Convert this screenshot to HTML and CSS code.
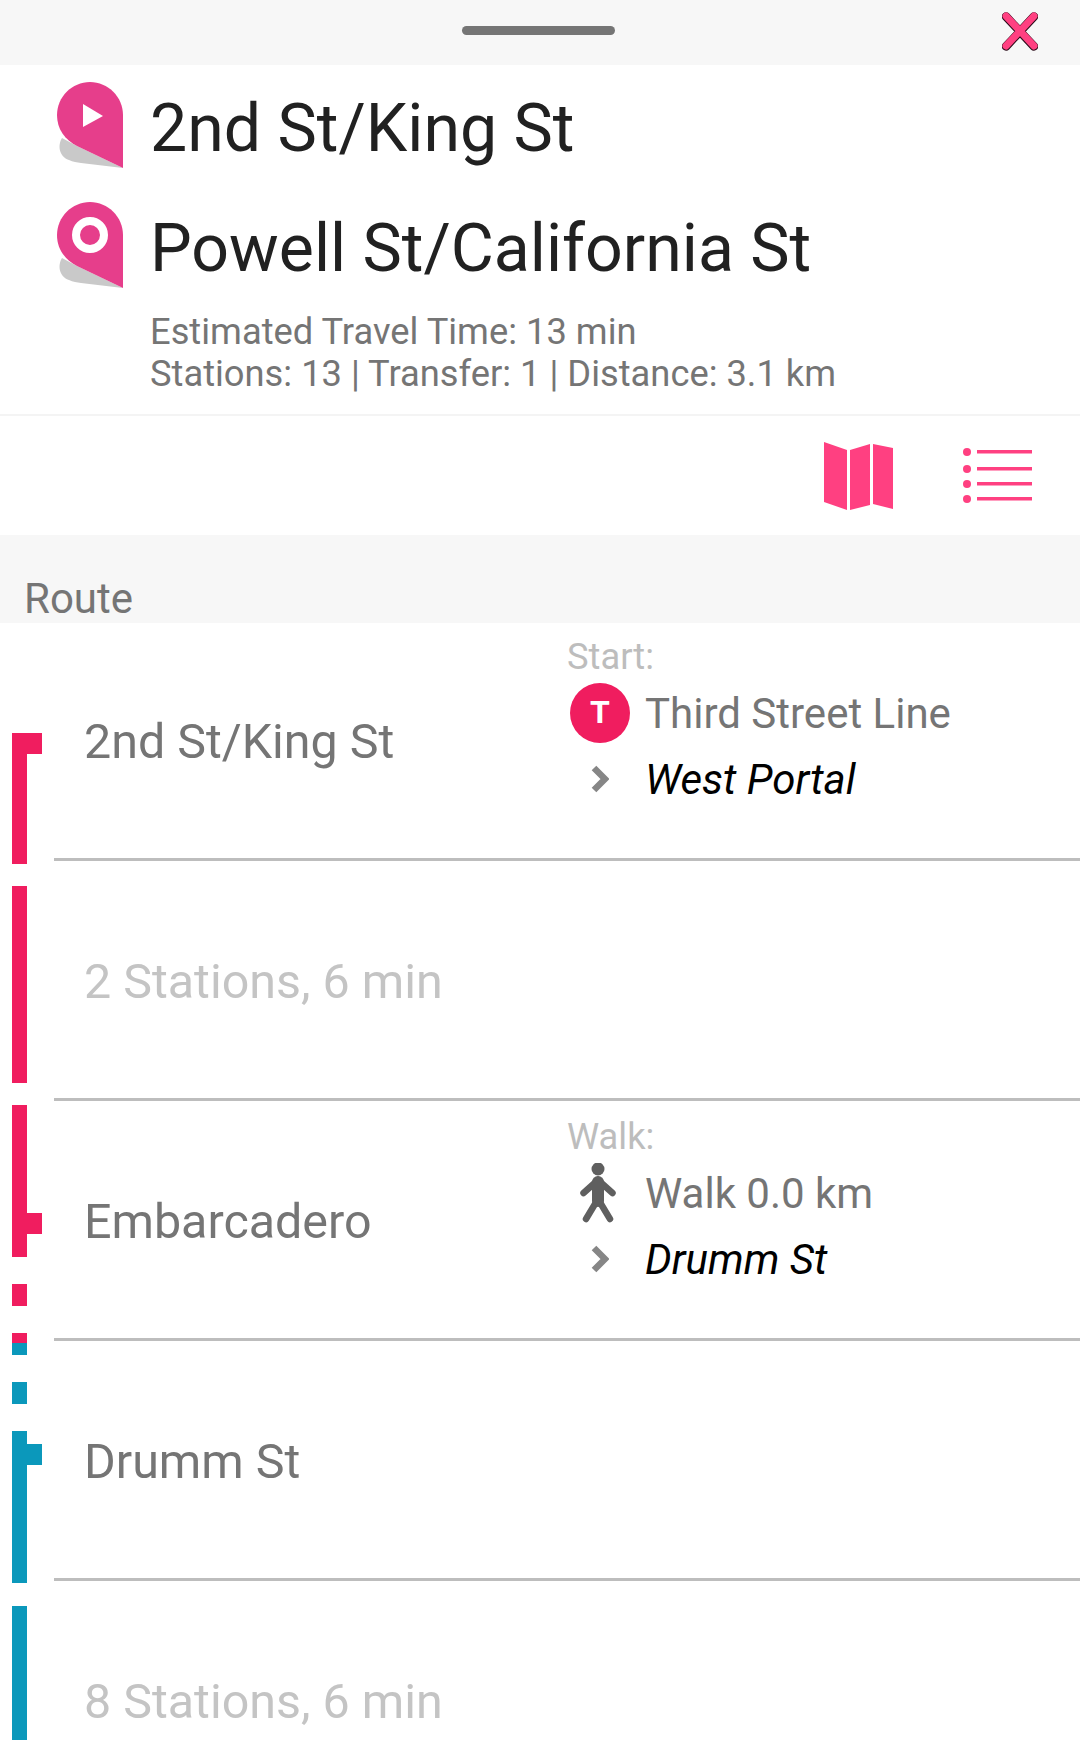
FILE: index.html
```html
<!DOCTYPE html>
<html lang="en">
<head>
    <meta charset="UTF-8">
    <meta name="viewport" content="width=device-width, initial-scale=1.0">
    <title>Route</title>
    <link rel="stylesheet" href="styles.css">
</head>
<body>
    <div class="top-bar">
        <div class="handle"></div>
        <svg class="close-icon" viewBox="0 0 36 40">
            <path class="close-edge" d="M4 4.5 L32 34.5 M32 4.5 L4 34.5"/>
            <path class="close-mark" d="M4 4 L32 34 M32 4 L4 34"/>
        </svg>
    </div>

    <header class="trip">
        <div class="stop">
            <svg class="pin" viewBox="0 0 66 86">
                <path class="pin-shadow" d="M5 56 C1 62 1 74 12 78 C16 80 20 80 24 81 L66 86 L20 64 Z"/>
                <path class="pin-body" d="M33 0 C51 0 66 15 66 33 V86 L20 64 C8 58 0 47 0 33 C0 15 15 0 33 0 Z"/>
                <path class="pin-mark" d="M26 22 L46 34 L26 45 Z"/>
            </svg>
            <h1>2nd St/King St</h1>
        </div>
        <div class="stop">
            <svg class="pin" viewBox="0 0 66 86">
                <path class="pin-shadow" d="M5 56 C1 62 1 74 12 78 C16 80 20 80 24 81 L66 86 L20 64 Z"/>
                <path class="pin-body" d="M33 0 C51 0 66 15 66 33 V86 L20 64 C8 58 0 47 0 33 C0 15 15 0 33 0 Z"/>
                <circle class="pin-ring" cx="33" cy="33" r="14"/>
            </svg>
            <h1>Powell St/California St</h1>
        </div>
        <div class="summary">
            <div>Estimated Travel Time: 13 min</div>
            <div>Stations: 13 | Transfer: 1 | Distance: 3.1 km</div>
        </div>
    </header>

    <div class="view-tabs">
        <svg class="map-icon" viewBox="0 0 69 68">
            <path d="M0 0 L23 8 V68 L0 60 Z"/>
            <path d="M26 8 L46 2 V63 L26 68 Z"/>
            <path d="M49 2 L69 6 V67 L49 62 Z"/>
        </svg>
        <svg class="list-icon" viewBox="0 0 70 56">
            <circle cx="4" cy="4" r="4"/>
            <circle cx="4" cy="21" r="4"/>
            <circle cx="4" cy="36" r="4"/>
            <circle cx="4" cy="51" r="4"/>
            <rect x="14" y="2" width="55" height="3.5"/>
            <rect x="14" y="19" width="55" height="3.5"/>
            <rect x="14" y="34" width="55" height="3.5"/>
            <rect x="14" y="49" width="55" height="3.5"/>
        </svg>
    </div>

    <div class="section-title">Route</div>

    <div class="route">
        <div class="row">
            <div class="rail">
                <div class="seg red tick-top start-1"></div>
            </div>
            <div class="row-main">
                <div class="name">2nd St/King St</div>
                <div class="detail">
                    <div class="detail-label">Start:</div>
                    <div class="step">
                        <div class="step-icon"><span class="line-badge">T</span></div>
                        <div class="step-text">Third Street Line</div>
                    </div>
                    <div class="step next">
                        <div class="step-icon">
                            <svg class="chevron" viewBox="0 0 18 28"><path d="M3 3 L14 14 L3 25"/></svg>
                        </div>
                        <div class="step-text">West Portal</div>
                    </div>
                </div>
            </div>
        </div>

        <div class="row">
            <div class="rail">
                <div class="seg red between"></div>
            </div>
            <div class="row-main">
                <div class="name muted">2 Stations, 6 min</div>
            </div>
        </div>

        <div class="row">
            <div class="rail">
                <div class="seg red tick-mid arrive"></div>
                <div class="seg red dash"></div>
                <div class="seg red dash-end"></div>
            </div>
            <div class="row-main">
                <div class="name">Embarcadero</div>
                <div class="detail">
                    <div class="detail-label">Walk:</div>
                    <div class="step">
                        <div class="step-icon">
                            <svg class="walk-icon" viewBox="0 0 38 60">
                                <circle cx="19" cy="6" r="6.5"/>
                                <path class="walk-limb" d="M19 17 L4.5 30 M19 17 L33.5 30 M19 36 L7 56 M19 36 L31 56"/>
                                <path class="walk-body" d="M19 19 V38"/>
                            </svg>
                        </div>
                        <div class="step-text">Walk 0.0 km</div>
                    </div>
                    <div class="step next">
                        <div class="step-icon">
                            <svg class="chevron" viewBox="0 0 18 28"><path d="M3 3 L14 14 L3 25"/></svg>
                        </div>
                        <div class="step-text">Drumm St</div>
                    </div>
                </div>
            </div>
        </div>

        <div class="row">
            <div class="rail">
                <div class="seg blue dash-start"></div>
                <div class="seg blue dash"></div>
                <div class="seg blue tick-mid depart"></div>
            </div>
            <div class="row-main">
                <div class="name">Drumm St</div>
            </div>
        </div>

        <div class="row">
            <div class="rail">
                <div class="seg blue between"></div>
            </div>
            <div class="row-main">
                <div class="name muted">8 Stations, 6 min</div>
            </div>
        </div>
    </div>
</body>
</html>
```

FILE: styles.css
```css
html, body {
    height: 1740px;
    overflow: hidden;
}
body {
    font-family: Roboto, Arial, sans-serif;
    margin: 0;
    padding: 0;
    background-color: white;
}

/* drag bar */
.top-bar {
    height: 65px;
    background-color: #f7f7f7;
    padding: 26px 0 0 462px;
    box-sizing: border-box;
    position: relative;
}
.handle {
    width: 153px;
    height: 9px;
    border-radius: 5px;
    background-color: #757575;
}
.close-icon {
    position: absolute;
    top: 12px;
    right: 42px;
    width: 36px;
    height: 40px;
    fill: none;
    stroke-linecap: round;
}
.close-edge {
    stroke: #2a0a18;
    stroke-width: 8.5;
}
.close-mark {
    stroke: #ff4081;
    stroke-width: 7;
}

/* trip header */
.trip {
    height: 351px;
    padding: 17px 0 0 57px;
    box-sizing: border-box;
    border-bottom: 2px solid #f4f4f4;
}
.stop {
    display: flex;
    height: 120px;
}
.pin {
    width: 66px;
    height: 86px;
    flex-shrink: 0;
}
.pin-body {
    fill: #e63e8b;
}
.pin-shadow {
    fill: #c9c9c9;
}
.pin-mark {
    fill: white;
}
.pin-ring {
    fill: none;
    stroke: white;
    stroke-width: 8;
}
h1 {
    margin: 9px 0 0 27px;
    font-size: 66.2px;
    font-weight: 400;
    line-height: 76px;
    color: #212121;
}
.summary {
    margin: -11px 0 0 93px;
    font-size: 36.3px;
    line-height: 42px;
    color: #757575;
}

/* map / list switch */
.view-tabs {
    height: 119px;
    display: flex;
    align-items: center;
    justify-content: flex-end;
    padding: 0 47px 0 0;
    gap: 70px;
    box-sizing: border-box;
}
.map-icon {
    width: 69px;
    height: 68px;
    fill: #ff4081;
}
.list-icon {
    width: 70px;
    height: 56px;
    fill: #ff4081;
}

.section-title {
    height: 88px;
    background-color: #f7f7f7;
    padding: 41px 0 0 24px;
    box-sizing: border-box;
    font-size: 42px;
    line-height: 46px;
    color: #757575;
}

/* route list */
.row {
    display: flex;
    height: 240px;
}
.rail {
    width: 54px;
    flex-shrink: 0;
    padding-left: 12px;
    box-sizing: border-box;
}
.row-main {
    flex: 1;
    height: 238px;
    box-sizing: border-box;
    border-bottom: 3px solid #bdbdbd;
    display: grid;
    grid-template-columns: 513px 1fr;
    align-items: center;
}
.name {
    padding: 2px 0 0 30px;
    font-size: 48.4px;
    color: #757575;
}
.muted {
    color: #c4c4c4;
}

/* line segments */
.seg {
    width: 15px;
    position: relative;
}
.red {
    background-color: #f01d5f;
}
.blue {
    background-color: #0b98bb;
}
.tick-top::after,
.tick-mid::after {
    content: "";
    position: absolute;
    left: 15px;
    width: 15px;
    height: 21px;
    background-color: inherit;
}
.start-1 {
    margin-top: 110px;
    height: 131px;
}
.tick-top::after {
    top: 0;
}
.between {
    margin-top: 23px;
    height: 197px;
}
.arrive {
    margin-top: 2px;
    height: 152px;
}
.arrive::after {
    top: 108px;
}
.depart {
    margin-top: 27px;
    height: 152px;
}
.depart::after {
    top: 13px;
}
.dash {
    margin-top: 27px;
    height: 22px;
}
.dash-end {
    margin-top: 27px;
    height: 10px;
}
.dash-start {
    height: 12px;
}

/* transfer details */
.detail {
    align-self: start;
    padding-top: 12px;
}
.detail-label {
    font-size: 36.3px;
    line-height: 44px;
    color: #bdbdbd;
}
.step {
    display: flex;
    align-items: center;
    height: 60px;
    margin-top: 4px;
}
.step.next {
    margin-top: 6px;
}
.step-icon {
    width: 66px;
    margin-right: 12px;
    display: flex;
    justify-content: center;
}
.step-text {
    font-size: 42px;
    color: #757575;
}
.next .step-text {
    font-style: italic;
    color: black;
}
.line-badge {
    width: 60px;
    height: 60px;
    border-radius: 50%;
    background-color: #f01d5f;
    color: white;
    font-size: 32px;
    font-weight: 700;
    line-height: 58px;
    text-align: center;
}
.chevron {
    width: 18px;
    height: 28px;
    fill: none;
    stroke: #868686;
    stroke-width: 6.5;
}
.walk-icon {
    width: 38px;
    height: 60px;
    margin-left: -4px;
    fill: #5f5f5f;
    stroke-linecap: round;
}
.walk-limb {
    fill: none;
    stroke: #5f5f5f;
    stroke-width: 6.5;
}
.walk-body {
    fill: none;
    stroke: #5f5f5f;
    stroke-width: 12;
}
```
